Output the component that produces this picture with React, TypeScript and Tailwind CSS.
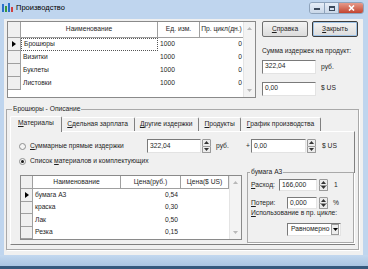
import React from 'react';

function Acc({ text, i = 0 }: { text: string; i?: number }) {
  return (
    <>
      {text.slice(0, i)}
      <u>{text[i]}</u>
      {text.slice(i + 1)}
    </>
  );
}

function Edit({ value, className }: { value: string; className: string }) {
  return (
    <div
      className={`flex items-center bg-white border border-t-[#7a7a7a] border-l-[#7a7a7a] border-b-[#e3e3e3] border-r-[#e3e3e3] pl-[2px] ${className}`}
    >
      {value}
    </div>
  );
}

function Spin({ className }: { className: string }) {
  return (
    <div className={`flex flex-col ${className}`}>
      <div className="flex-1 flex items-center justify-center bg-[#ececec] border border-[#9a9a9a] rounded-t-[1px]">
        <svg width="5" height="3" viewBox="0 0 5 3">
          <path d="M0 3 L2.5 0 L5 3Z" fill="#333" />
        </svg>
      </div>
      <div className="flex-1 flex items-center justify-center bg-[#ececec] border border-t-0 border-[#9a9a9a] rounded-b-[1px]">
        <svg width="5" height="3" viewBox="0 0 5 3">
          <path d="M0 0 L2.5 3 L5 0Z" fill="#333" />
        </svg>
      </div>
    </div>
  );
}

function Radio({ checked }: { checked?: boolean }) {
  return (
    <span className="w-[7px] h-[7px] rounded-full border border-[#8e8f8f] bg-[#f4f4f4] flex items-center justify-center shrink-0">
      {checked && <span className="w-[3px] h-[3px] rounded-full bg-[#1a1a1a]" />}
    </span>
  );
}

function ScrollBar() {
  return (
    <div className="w-[12px] bg-[#f3f3f3] border-l border-[#e4e4e4] flex flex-col justify-between items-center py-[5px]">
      <svg width="5" height="3" viewBox="0 0 5 3">
        <path d="M0 3 L2.5 0 L5 3Z" fill="#b8b8b8" />
      </svg>
      <svg width="5" height="3" viewBox="0 0 5 3">
        <path d="M0 0 L2.5 3 L5 0Z" fill="#b8b8b8" />
      </svg>
    </div>
  );
}

function Pointer() {
  return (
    <svg width="4" height="6" viewBox="0 0 4 6">
      <path d="M0 0 L4 3 L0 6Z" fill="#000" />
    </svg>
  );
}

const products = ['Брошюры', 'Визитки', 'Буклеты', 'Листовки'];

const materials = [
  { name: 'бумага А3', rub: '0,54' },
  { name: 'краска', rub: '0,30' },
  { name: 'Лак', rub: '0,50' },
  { name: 'Резка', rub: '0,15' },
];

const tabs = [
  { t: 'Материалы', i: 0 },
  { t: 'Сдельная зарплата', i: 0 },
  { t: 'Другие издержки', i: 0 },
  { t: 'Продукты', i: 0 },
  { t: 'График производства', i: 0 },
];

export default function App() {
  return (
    <div className="w-[368px] h-[269px] overflow-hidden bg-[#bfd5ee] flex flex-col font-['Liberation_Sans',Arial,sans-serif] text-[6.7px] leading-none text-[#1e1e1e]">
      {/* title bar */}
      <div className="h-[19px] flex items-start shrink-0">
        <svg className="ml-[2px] mt-[3px]" width="11" height="9" viewBox="0 0 11 9">
          <rect x="0" y="1" width="2" height="8" fill="#2a6fc9" />
          <rect x="3" y="3" width="2" height="6" fill="#3a9a3a" />
          <rect x="6" y="0" width="2" height="9" fill="#2a6fc9" />
          <rect x="9" y="4" width="2" height="5" fill="#d04040" />
        </svg>
        <span className="ml-[3px] mt-[4px] text-[7.5px] text-black">Производство</span>
        <div className="ml-auto mr-[4px] mt-[2px] flex h-[12px] rounded-[3px] border border-[#8ea3bb] overflow-hidden">
          <div className="w-[15px] bg-gradient-to-b from-[#e6eef8] to-[#c9d7e8] border-r border-[#8ea3bb] flex items-end justify-center pb-[3px]">
            <div className="w-[6px] h-[2px] bg-[#3c4a5c]" />
          </div>
          <div className="w-[14px] bg-gradient-to-b from-[#e6eef8] to-[#c9d7e8] border-r border-[#8ea3bb] flex items-center justify-center">
            <div className="w-[6px] h-[5px] border border-t-2 border-[#3c4a5c]" />
          </div>
          <div className="w-[24px] bg-gradient-to-b from-[#e59a8a] to-[#c2432f] flex items-center justify-center">
            <svg width="7" height="6" viewBox="0 0 7 6">
              <path d="M1 0.5 L6 5.5 M6 0.5 L1 5.5" stroke="#fff" strokeWidth="1.6" />
            </svg>
          </div>
        </div>
      </div>

      {/* client area */}
      <div className="ml-[4px] w-[359px] h-[236px] bg-[#f0f0f0] flex flex-col shrink-0">
        {/* top section */}
        <div className="flex mt-[2px] ml-[3px]">
          <div className="w-[249px] h-[77px] border border-[#8a8a8a] bg-white flex">
            <div className="flex-1 flex flex-col">
              <div className="flex h-[16px] border-b border-[#a0a0a0]">
                <div className="w-[13px] border-r border-[#a0a0a0] bg-[#f0f0f0]" />
                <div className="w-[137px] border-r border-[#a0a0a0] flex items-center justify-center">Наименование</div>
                <div className="w-[42px] border-r border-[#a0a0a0] flex items-center justify-center">Ед. изм.</div>
                <div className="flex-1 flex items-center justify-center whitespace-nowrap overflow-hidden">Пр. цикл(дн.)</div>
              </div>
              {products.map((p, k) => (
                <div key={p} className="flex h-[13px]">
                  <div className="w-[13px] border-r border-b border-[#a0a0a0] bg-[#f0f0f0] flex items-center justify-center">
                    {k === 0 && <Pointer />}
                  </div>
                  <div className={`w-[137px] flex items-center pl-[2px] ${k === 0 ? 'border border-dotted border-[#555]' : ''}`}>{p}</div>
                  <div className="w-[42px] flex items-center pl-[2px]">1000</div>
                  <div className="flex-1 flex items-center justify-end pr-[1px]">0</div>
                </div>
              ))}
            </div>
            <ScrollBar />
          </div>

          <div className="ml-[6px] w-[96px] flex flex-col">
            <div className="flex gap-[4px]">
              <div className="w-[46px] h-[16px] rounded-[2px] border border-[#707070] bg-gradient-to-b from-[#f4f4f4] to-[#dcdcdc] flex items-center justify-center">
                <Acc text="Справка" />
              </div>
              <div className="w-[46px] h-[16px] rounded-[2px] border border-[#3c3c3c] shadow-[inset_0_0_0_1px_#9fc3e6] bg-gradient-to-b from-[#f4f4f4] to-[#dcdcdc] flex items-center justify-center">
                <Acc text="Закрыть" />
              </div>
            </div>
            <div className="mt-[11px]">Сумма издержек на продукт:</div>
            <div className="mt-[5px] flex items-center">
              <Edit value="322,04" className="w-[54px] h-[14px]" />
              <span className="ml-[5px] mt-[2px]">руб.</span>
            </div>
            <div className="mt-[8px] flex items-center">
              <Edit value="0,00" className="w-[54px] h-[14px]" />
              <span className="ml-[5px]">$ US</span>
            </div>
          </div>
        </div>

        {/* description group box */}
        <fieldset className="ml-[2px] mt-[7px] w-[353px] h-[145px] border border-[#a9a9a9] shadow-[1px_1px_0_#fff]">
          <legend className="ml-[5px] px-[1px] leading-[8px]">Брошюры - Описание</legend>
          <div className="pl-[3px] pt-[2px] flex flex-col">
            {/* tabs */}
            <div className="flex items-end h-[16px] relative z-10">
              {tabs.map((tb, k) =>
                k === 0 ? (
                  <div
                    key={tb.t}
                    className="h-[16px] px-[7px] pb-[3px] bg-[#f0f0f0] border-l border-t border-r border-l-white border-t-white border-r-[#808080] rounded-t-[2px] flex items-center -mb-[1px]"
                  >
                    <Acc text={tb.t} i={tb.i} />
                  </div>
                ) : (
                  <div
                    key={tb.t}
                    className="h-[14px] px-[5.5px] border-t border-r border-t-white border-r-[#808080] rounded-t-[2px] flex items-center"
                  >
                    <Acc text={tb.t} i={tb.i} />
                  </div>
                )
              )}
            </div>
            {/* tab panel */}
            <div className="w-[345px] h-[114px] border border-l-white border-t-white border-r-[#808080] border-b-[#808080] flex flex-col">
              <div className="mt-[7px] h-[14px] flex items-center pl-[8px]">
                <Radio />
                <span className="ml-[4px] w-[117px]">
                  <Acc text="Суммарные прямые издержки" />
                </span>
                <Edit value="322,04" className="w-[54px] h-[14px]" />
                <Spin className="ml-[1px] w-[9px] h-[14px]" />
                <span className="ml-[5px] w-[30px]">руб.</span>
                <span className="w-[5px]">+</span>
                <Edit value="0,00" className="w-[55px] h-[14px]" />
                <Spin className="ml-[1px] w-[9px] h-[14px]" />
                <span className="ml-[6px]">$ US</span>
              </div>
              <div className="mt-[3px] h-[10px] flex items-center pl-[8px]">
                <Radio checked />
                <span className="ml-[4px]">
                  <Acc text="Список материалов и комплектующих" i={7} />
                </span>
              </div>
              <div className="mt-[2px] flex items-start">
                {/* materials grid */}
                <div className="ml-[9px] mt-[7px] w-[222px] h-[65px] border border-[#8a8a8a] bg-white flex">
                  <div className="flex-1 flex flex-col">
                    <div className="flex h-[13px] border-b border-[#a0a0a0]">
                      <div className="w-[12px] border-r border-[#a0a0a0] bg-[#f0f0f0]" />
                      <div className="w-[88px] border-r border-[#a0a0a0] flex items-center justify-center">Наименование</div>
                      <div className="w-[60px] border-r border-[#a0a0a0] flex items-center justify-center">Цена(руб.)</div>
                      <div className="flex-1 border-r border-[#a0a0a0] flex items-center justify-center">Цена($ US)</div>
                    </div>
                    {materials.map((m, k) => (
                      <div key={m.name} className="flex h-[12.5px]">
                        <div className="w-[12px] border-r border-b border-[#a0a0a0] bg-[#f0f0f0] flex items-center justify-center">
                          {k === 0 && <Pointer />}
                        </div>
                        <div className="w-[88px] flex items-center pl-[2px]">{m.name}</div>
                        <div className="w-[60px] flex items-center justify-end pr-[3px]">{m.rub}</div>
                        <div className="flex-1" />
                      </div>
                    ))}
                  </div>
                  <ScrollBar />
                </div>

                {/* material group box */}
                <fieldset className="ml-[5px] w-[107px] h-[75px] border border-[#a9a9a9] shadow-[1px_1px_0_#fff]">
                  <legend className="ml-[2px] px-[1px] leading-[8px]">бумага А3</legend>
                  <div className="pl-[3px] pt-[3px] flex flex-col">
                    <div className="h-[12px] flex items-center">
                      <span className="w-[28px]">
                        <Acc text="Расход:" />
                      </span>
                      <Edit value="166,000" className="w-[38px] h-[12px]" />
                      <Spin className="ml-[2px] w-[9px] h-[12px]" />
                      <span className="ml-[6px]">1</span>
                    </div>
                    <div className="mt-[6px] h-[12px] flex items-center">
                      <span className="w-[36px]">
                        <Acc text="Потери:" />
                      </span>
                      <Edit value="0,000" className="w-[30px] h-[12px]" />
                      <Spin className="ml-[2px] w-[9px] h-[12px]" />
                      <span className="ml-[5px]">%</span>
                    </div>
                    <div className="h-[8px] flex items-center">
                      <Acc text="Использование в пр. цикле:" />
                    </div>
                    <div className="mt-[6px] ml-[36px] w-[54px] h-[13px] bg-white border border-t-[#7a7a7a] border-l-[#7a7a7a] border-b-[#e3e3e3] border-r-[#e3e3e3] flex items-center">
                      <span className="flex-1 pl-[3px]">Равномерно</span>
                      <div className="w-[8px] h-[11px] mr-[1px] bg-[#ececec] border border-[#9a9a9a] flex items-center justify-center">
                        <svg width="5" height="3" viewBox="0 0 5 3">
                          <path d="M0 0 L2.5 3 L5 0Z" fill="#000" />
                        </svg>
                      </div>
                    </div>
                  </div>
                </fieldset>
              </div>
            </div>
          </div>
        </fieldset>
      </div>

      {/* bottom frame */}
      <div className="h-[11px] shrink-0 bg-gradient-to-b from-[#c3d8ef] to-[#a9c4e2]" />
      <div className="h-[3px] shrink-0 bg-[#35587d]" />
    </div>
  );
}
